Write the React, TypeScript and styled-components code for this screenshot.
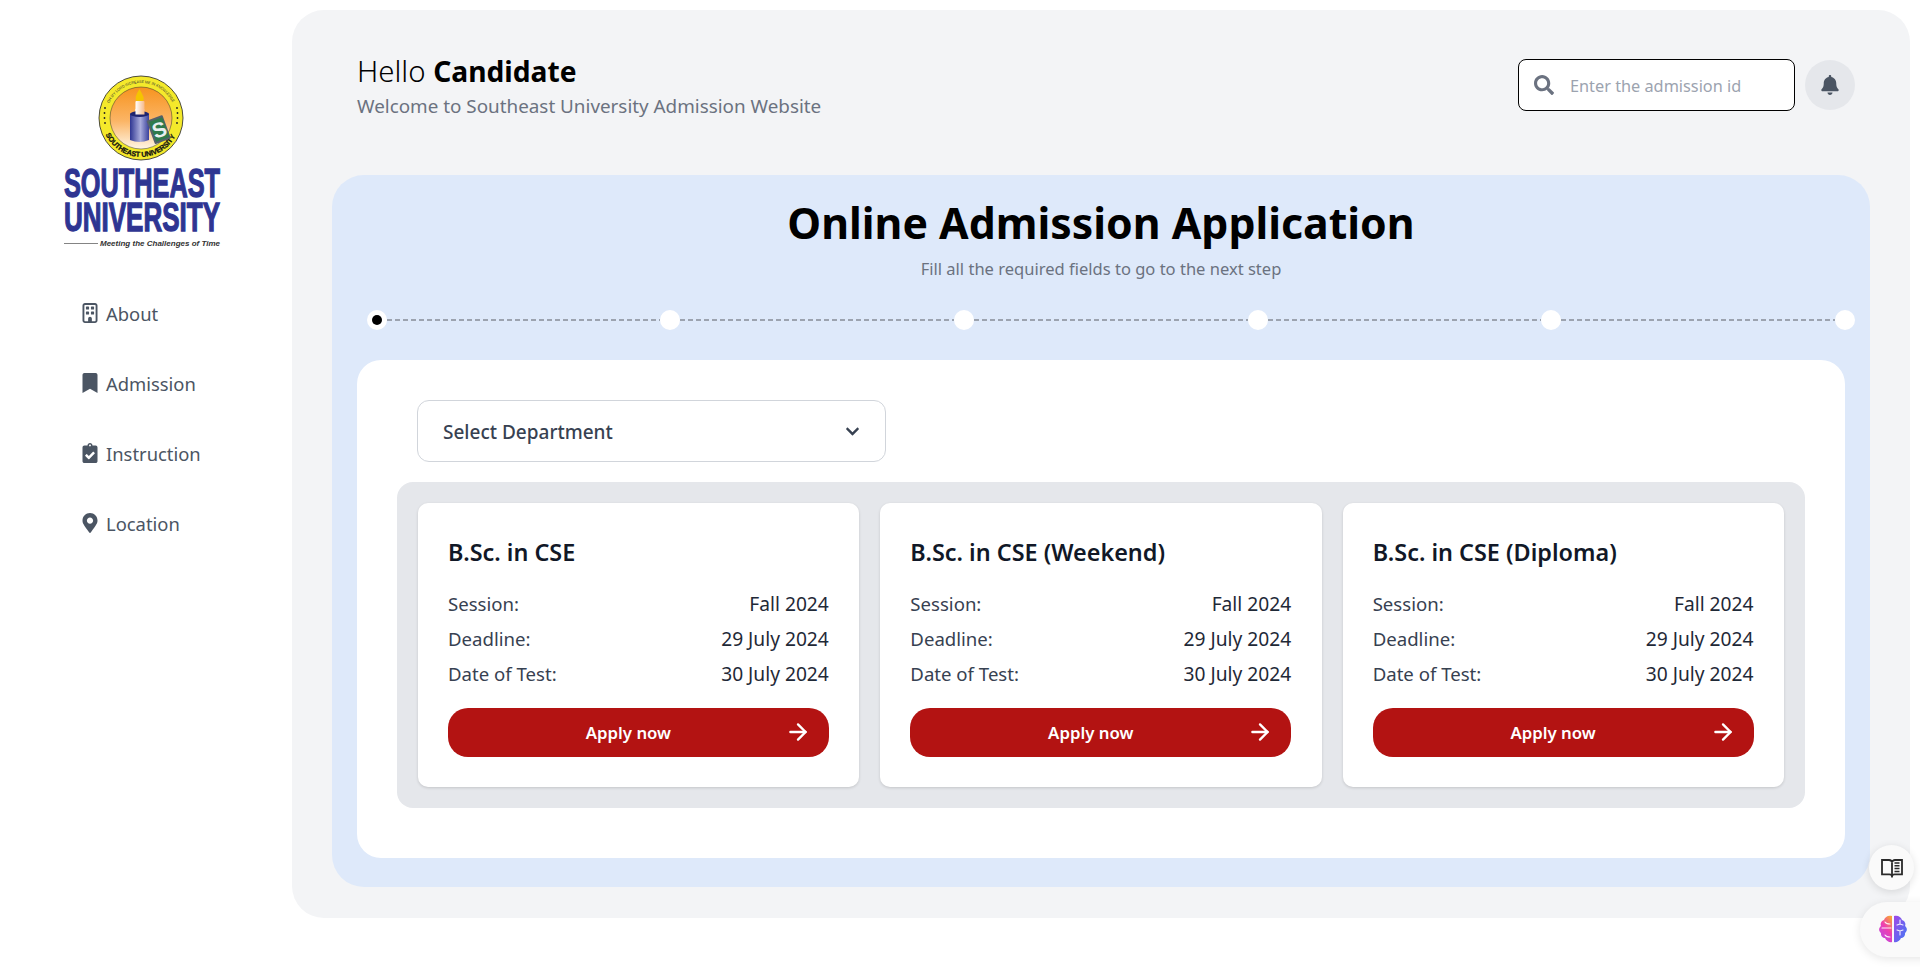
import React from 'react';
import styled, { createGlobalStyle } from 'styled-components';
import { FaBookmark, FaClipboardCheck, FaMapMarkerAlt, FaSearch, FaBell, FaChevronDown } from 'react-icons/fa';
import { FaRegBuilding } from 'react-icons/fa6';
import { ArrowRight } from 'lucide-react';

const Global = createGlobalStyle`
  html, body { margin: 0; padding: 0; background: #fff; }
  body { font-family: "Noto Sans", "Open Sans", sans-serif; overflow: hidden; }
  * { box-sizing: border-box; }
`;

const Page = styled.div`
  display: flex;
  width: 1920px;
  height: 970px;
  background: #fff;
`;

const Sidebar = styled.aside`
  width: 292px;
  flex: none;
  padding: 73px 0 0 62px;
`;

const LogoSvg = styled.svg`
  display: block;
  width: 162px;
  height: 182px;
`;

const Nav = styled.nav`
  display: flex;
  flex-direction: column;
  gap: 38px;
  margin: 42px 0 0 20px;
`;

const NavItem = styled.a`
  display: flex;
  align-items: center;
  gap: 8px;
  height: 32px;
  font-size: 18.4px;
  color: #4b5563;
  svg { width: 16px; height: 20px; flex: none; }
`;

const Main = styled.main`
  width: 1618px;
  height: 908px;
  margin-top: 10px;
  padding: 0 40px;
  background: #f3f4f6;
  border-radius: 32px;
`;

const Header = styled.header`
  display: flex;
  justify-content: space-between;
  height: 165px;
  padding: 40px 15px 0 25px;
`;

const Greeting = styled.h1`
  margin: 0;
  font-size: 29.4px;
  line-height: 42px;
  font-weight: 300;
  color: #000;
  b { font-size: 28.2px; font-weight: 700; }
`;

const Welcome = styled.p`
  margin: 0;
  font-size: 18.85px;
  line-height: 28px;
  color: #6b7280;
`;

const HeaderTools = styled.div`
  display: flex;
  gap: 10px;
  margin-top: 9px;
  align-items: flex-start;
`;

const Search = styled.div`
  display: flex;
  align-items: center;
  gap: 16px;
  width: 277px;
  height: 52px;
  padding: 2px 0 0 15px;
  background: #fff;
  border: 1px solid #000;
  border-radius: 8px;
  font-size: 16.3px;
  color: #9ca3af;
  svg { width: 20px; height: 20px; color: #6b7280; margin-top: -3px; }
`;

const BellButton = styled.div`
  width: 50px;
  height: 50px;
  margin-top: 1px;
  border-radius: 50%;
  background: #e5e7eb;
  color: #4b5563;
  display: flex;
  align-items: center;
  justify-content: center;
  svg { width: 18px; height: 20px; }
`;

const Panel = styled.section`
  height: 712px;
  padding: 20px 25px 25px;
  background: #dee9fa;
  border-radius: 32px;
`;

const Title = styled.h2`
  margin: 0;
  text-align: center;
  font-size: 42.8px;
  line-height: 56px;
  font-weight: 700;
  color: #000;
`;

const Subtitle = styled.p`
  margin: 5px 0 0;
  text-align: center;
  font-size: 16.55px;
  line-height: 26px;
  color: #6b7280;
`;

const Stepper = styled.div`
  display: flex;
  align-items: center;
  margin: 28px -10px 0 9.5px;
`;

const Dot = styled.span<{ $active?: boolean }>`
  width: 20px;
  height: 20px;
  flex: none;
  border-radius: 50%;
  background: #fff;
  display: flex;
  align-items: center;
  justify-content: center;
  &::after {
    content: '';
    width: 10px;
    height: 10px;
    border-radius: 50%;
    background: ${p => (p.$active ? '#000' : 'transparent')};
  }
`;

const Dash = styled.span`
  flex: 1;
  height: 2px;
  background: repeating-linear-gradient(90deg, #9ca3af 0 5px, transparent 5px 8px);
`;

const WhiteCard = styled.div`
  height: 498px;
  margin-top: 30px;
  padding: 40px 40px 0;
  background: #fff;
  border-radius: 24px;
`;

const Select = styled.div`
  display: flex;
  align-items: center;
  justify-content: space-between;
  width: 469px;
  height: 62px;
  margin-left: 20px;
  padding: 2px 25px 0;
  border: 1px solid #d1d5db;
  border-radius: 12px;
  font-size: 19px;
  font-weight: 500;
  color: #374151;
  svg { width: 15px; height: 15px; color: #374151; margin-top: -2px; }
`;

const Programs = styled.div`
  display: grid;
  grid-template-columns: repeat(3, 1fr);
  gap: 21px;
  margin-top: 20px;
  padding: 21px;
  background: #e5e7eb;
  border-radius: 16px;
`;

const ProgramCard = styled.article`
  height: 284px;
  padding: 30px 30.5px 30px 30px;
  background: #fff;
  border-radius: 10px;
  box-shadow: 0 1px 3px rgba(0, 0, 0, 0.15);
`;

const ProgramTitle = styled.h3`
  margin: 1px 0 16px;
  font-size: 23.4px;
  line-height: 36px;
  font-weight: 600;
  color: #111827;
`;

const Row = styled.div`
  display: flex;
  justify-content: space-between;
  align-items: baseline;
  height: 35px;
  line-height: 35px;
`;

const RowLabel = styled.span`
  font-size: 18.6px;
  color: #374151;
`;

const RowValue = styled.span`
  font-size: 19.2px;
  color: #1f2937;
`;

const ApplyButton = styled.div`
  position: relative;
  display: flex;
  align-items: center;
  justify-content: center;
  height: 49px;
  margin-top: 17px;
  padding-right: 20px;
  background: #b31312;
  border-radius: 20px;
  color: #fff;
  font-size: 16.8px;
  font-weight: 600;
  svg { position: absolute; right: 18px; top: 11px; width: 26px; height: 26px; }
`;

const FloatBook = styled.div`
  position: fixed;
  left: 1869px;
  top: 845px;
  width: 45px;
  height: 45px;
  border-radius: 50%;
  background: #fafafa;
  box-shadow: 0 2px 8px rgba(0, 0, 0, 0.12);
  display: flex;
  align-items: center;
  justify-content: center;
`;

const FloatBrain = styled.div`
  position: fixed;
  left: 1860px;
  top: 902px;
  width: 90px;
  height: 55px;
  padding: 13px 0 0 18px;
  border-radius: 28px;
  background: #fafafa;
  box-shadow: 0 2px 10px rgba(0, 0, 0, 0.1);
`;

const Logo = () => (
  <LogoSvg viewBox="0 0 162 182">
    <defs>
      <linearGradient id="org" x1="0" y1="0" x2="0" y2="1">
        <stop offset="0" stopColor="#f7931e" />
        <stop offset="0.55" stopColor="#fbb566" />
        <stop offset="1" stopColor="#fff6e6" />
      </linearGradient>
      <linearGradient id="cyl" x1="0" y1="0" x2="1" y2="0">
        <stop offset="0" stopColor="#2e3592" />
        <stop offset="0.55" stopColor="#a9acdc" />
        <stop offset="1" stopColor="#3a419c" />
      </linearGradient>
      <linearGradient id="can" x1="0" y1="0" x2="1" y2="0">
        <stop offset="0" stopColor="#fff" />
        <stop offset="1" stopColor="#f6b98a" />
      </linearGradient>
      <path id="topArc" d="M 47.3 30.2 A 35 35 0 0 1 110.7 30.2" />
      <path id="botArc" d="M 43.7 61.5 A 39 39 0 0 0 114.3 61.5" />
    </defs>
    <circle cx="79" cy="45" r="42" fill="#f4e92b" stroke="#222" strokeWidth="0.8" />
    <circle cx="79" cy="45" r="31" fill="url(#org)" stroke="#333" strokeWidth="0.5" />
    <text fontFamily="Liberation Sans, sans-serif" fontSize="4" fill="#333">
      <textPath href="#topArc" textLength="78" lengthAdjust="spacingAndGlyphs">OH MY LORD INCREASE ME IN KNOWLEDGE</textPath>
    </text>
    <text fontFamily="Liberation Sans, sans-serif" fontSize="7.2" fontWeight="700" fill="#111" stroke="#111" strokeWidth="0.25">
      <textPath href="#botArc" textLength="86">SOUTHEAST UNIVERSITY</textPath>
    </text>
    <g fill="#222">
      <circle cx="43" cy="35" r="0.9" /><circle cx="42.5" cy="40" r="0.9" /><circle cx="42.5" cy="45" r="0.9" /><circle cx="43" cy="50" r="0.9" />
      <circle cx="115" cy="35" r="0.9" /><circle cx="115.5" cy="40" r="0.9" /><circle cx="115.5" cy="45" r="0.9" /><circle cx="115" cy="50" r="0.9" />
    </g>
    <path d="M77.5 16 C74.5 21 72.5 25 74.5 28 H81 C83 25 80.5 22 77.5 16Z" fill="#f5c400" />
    <rect x="73.5" y="28" width="9" height="16" rx="1" fill="url(#can)" />
    <path d="M68 41 Q77.5 37 87 41 V67 Q77.5 71 68 67Z" fill="url(#cyl)" />
    <ellipse cx="77.5" cy="41" rx="9.5" ry="3" fill="#1e2470" />
    <rect x="73.5" y="36" width="9" height="5.5" fill="url(#can)" />
    <g transform="rotate(-20 97 56)">
      <rect x="88" y="44" width="17" height="25" rx="1" fill="#56606a" />
      <rect x="90" y="46" width="14" height="21" fill="#2f7a4c" />
      <text x="97" y="64" textAnchor="middle" fontFamily="Liberation Sans, sans-serif" fontSize="21" fontWeight="700" fill="#e8eef0">S</text>
    </g>
    <g transform="scale(0.6 1)" fontFamily="'Liberation Sans', sans-serif" fontWeight="700" fill="#2e3592" stroke="#2e3592" strokeWidth="1.3">
      <text x="3.3" y="124" fontSize="40" textLength="260" lengthAdjust="spacingAndGlyphs">SOUTHEAST</text>
      <text x="3.3" y="158" fontSize="40" textLength="260" lengthAdjust="spacingAndGlyphs">UNIVERSITY</text>
    </g>
    <rect x="2" y="170" width="34" height="0.9" fill="#777" />
    <text x="38" y="173" fontFamily="Liberation Sans, sans-serif" fontSize="7.6" fontWeight="700" fontStyle="italic" fill="#333" textLength="120" lengthAdjust="spacingAndGlyphs">Meeting the Challenges of Time</text>
  </LogoSvg>
);

const BookIcon = () => (
  <svg width="22" height="20" viewBox="0 0 22 20" fill="none" stroke="#2a2a2a" strokeWidth="1.8">
    <path d="M1 2 H8 C9.6 2 11 3 11 4.6 C11 3 12.4 2 14 2 H21 V16.4 H13.6 C12 16.4 11 17.2 11 18.4 C11 17.2 10 16.4 8.4 16.4 H1Z" />
    <path d="M11 4.6 V19.6" />
    <path strokeWidth="1.5" d="M13.5 5 H18.5 M13.5 7.8 H18.5 M13.5 10.6 H18.5 M13.5 13.4 H18.5" />
  </svg>
);

const BrainIcon = () => (
  <svg width="30" height="28" viewBox="0 0 30 28" fill="none">
    <defs>
      <linearGradient id="lobeL" x1="0.8" y1="0" x2="0.2" y2="1">
        <stop offset="0" stopColor="#f9a23a" />
        <stop offset="0.45" stopColor="#ee3fb0" />
        <stop offset="1" stopColor="#b94be8" />
      </linearGradient>
      <linearGradient id="lobeR" x1="0" y1="0" x2="1" y2="1">
        <stop offset="0" stopColor="#a148e8" />
        <stop offset="1" stopColor="#3f7bf5" />
      </linearGradient>
    </defs>
    <path d="M14 1 C10 0 7 2 6 5 C3 6 2 9 3 11 C0.5 13 0.5 16 3 18 C2.5 21 5 23 7 23 C8 26 12 28 14 27Z" fill="url(#lobeL)" />
    <path d="M16 1 C20 0 23 2 24 5 C27 6 28 9 27 11 C29.5 13 29.5 16 27 18 C27.5 21 25 23 23 23 C22 26 18 28 16 27Z" fill="url(#lobeR)" />
    <path d="M4 13 H13 M7 7 C8 9 10 9 12 9 M7 20 C8 22 10 22 12 22 M22 5 L22 9 M19 10 L22 9 L25 10 M22 16 L22 20 M19 15 L22 16 L25 15" stroke="#fff" strokeWidth="1.1" strokeLinecap="round" opacity="0.9" />
  </svg>
);

const programs = ['B.Sc. in CSE', 'B.Sc. in CSE (Weekend)', 'B.Sc. in CSE (Diploma)'];
const navItems = [
  { label: 'About', Icon: FaRegBuilding },
  { label: 'Admission', Icon: FaBookmark },
  { label: 'Instruction', Icon: FaClipboardCheck },
  { label: 'Location', Icon: FaMapMarkerAlt },
];

export default function App() {
  return (
    <Page>
      <Global />
      <Sidebar>
        <Logo />
        <Nav>
          {navItems.map(({ label, Icon }) => (
            <NavItem key={label}><Icon />{label}</NavItem>
          ))}
        </Nav>
      </Sidebar>
      <Main>
        <Header>
          <div>
            <Greeting>Hello <b>Candidate</b></Greeting>
            <Welcome>Welcome to Southeast University Admission Website</Welcome>
          </div>
          <HeaderTools>
            <Search><FaSearch />Enter the admission id</Search>
            <BellButton><FaBell /></BellButton>
          </HeaderTools>
        </Header>
        <Panel>
          <Title>Online Admission Application</Title>
          <Subtitle>Fill all the required fields to go to the next step</Subtitle>
          <Stepper>
            <Dot $active /><Dash /><Dot /><Dash /><Dot /><Dash /><Dot /><Dash /><Dot /><Dash /><Dot />
          </Stepper>
          <WhiteCard>
            <Select>Select Department<FaChevronDown /></Select>
            <Programs>
              {programs.map(name => (
                <ProgramCard key={name}>
                  <ProgramTitle>{name}</ProgramTitle>
                  <Row><RowLabel>Session:</RowLabel><RowValue>Fall 2024</RowValue></Row>
                  <Row><RowLabel>Deadline:</RowLabel><RowValue>29 July 2024</RowValue></Row>
                  <Row><RowLabel>Date of Test:</RowLabel><RowValue>30 July 2024</RowValue></Row>
                  <ApplyButton>Apply now<ArrowRight strokeWidth={2.2} /></ApplyButton>
                </ProgramCard>
              ))}
            </Programs>
          </WhiteCard>
        </Panel>
      </Main>
      <FloatBook><BookIcon /></FloatBook>
      <FloatBrain><BrainIcon /></FloatBrain>
    </Page>
  );
}
